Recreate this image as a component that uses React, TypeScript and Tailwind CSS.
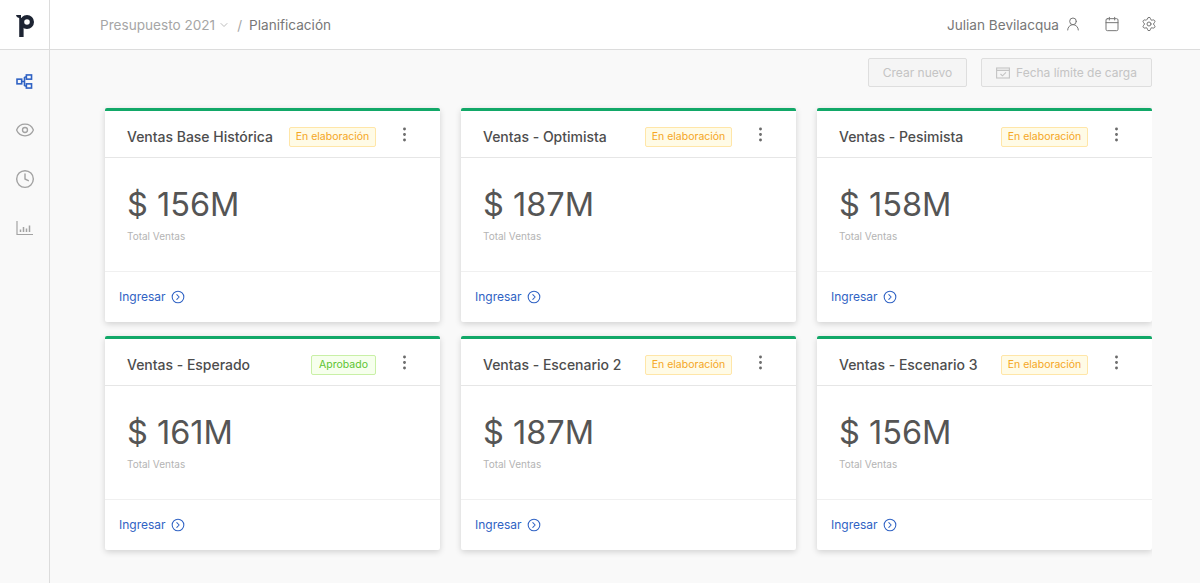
import { Calendar, ChevronDown, CircleChevronRight, Clock, Eye, EllipsisVertical, Settings, UserRound } from 'lucide-react';

interface Scenario {
  title: string;
  amount: string;
  status: 'draft' | 'approved';
}

const scenarios: Scenario[] = [
  { title: 'Ventas Base Histórica', amount: '$ 156M', status: 'draft' },
  { title: 'Ventas - Optimista', amount: '$ 187M', status: 'draft' },
  { title: 'Ventas - Pesimista', amount: '$ 158M', status: 'draft' },
  { title: 'Ventas - Esperado', amount: '$ 161M', status: 'approved' },
  { title: 'Ventas - Escenario 2', amount: '$ 187M', status: 'draft' },
  { title: 'Ventas - Escenario 3', amount: '$ 156M', status: 'draft' },
];

function Logo() {
  return (
    <svg width="20" height="26" viewBox="0 0 20 26" fill="none" aria-hidden="true">
      <path d="M1 2h5v3.2C3.4 5.2 1.4 4.2 1 2z" fill="#1d2433" />
      <path d="M6.4 5v19" stroke="#1d2433" strokeWidth="4.4" />
      <circle cx="12" cy="9" r="4.9" stroke="#1d2433" strokeWidth="4.2" />
    </svg>
  );
}

function FlowIcon() {
  return (
    <svg width="17" height="15" viewBox="0 0 18 16" fill="none" stroke="#2f62c4" strokeWidth="1.7" aria-hidden="true">
      <rect x="1" y="5.5" width="5" height="5" />
      <rect x="11" y="1" width="5.5" height="4.5" />
      <rect x="11" y="10.5" width="5.5" height="4.5" />
      <path d="M6 8h3M9 3.2V12.8M9 3.2h2M9 12.8h2" />
    </svg>
  );
}

function BarsIcon() {
  return (
    <svg width="17" height="16" viewBox="0 0 17 16" fill="none" stroke="#a3a3a3" strokeWidth="1.2" aria-hidden="true">
      <path d="M1 1v13.5h16" />
      <path d="M4.5 12V9.5M7.5 12V7M10.5 12V8.5M13.5 12V5.5" strokeWidth="1.5" />
    </svg>
  );
}

function DeadlineIcon() {
  return (
    <svg width="14" height="12" viewBox="0 0 14 12" fill="none" stroke="#c4c4c4" strokeWidth="1.1" aria-hidden="true">
      <rect x="0.6" y="1" width="12.8" height="10" />
      <path d="M0.6 3.4h12.8M4.5 7l2 1.8L10 5.4" />
    </svg>
  );
}

function ScenarioCard({ title, amount, status }: Scenario) {
  return (
    <article className="flex h-[214px] flex-col rounded-[2px] border-t-[3px] border-[#12a868] bg-white shadow-[0_2px_6px_rgba(0,0,0,0.16)]">
      <div className="flex h-[47px] shrink-0 items-center border-b border-[#e6e6e6] pt-[5px] pl-[22px]">
        <h2 className="flex-1 text-[14px] font-[450] tracking-[-0.02px] whitespace-nowrap text-[#4d4d4d]">{title}</h2>
        {status === 'draft' ? (
          <span className="flex h-[20px] w-[87px] items-center justify-center rounded-[2px] border border-[#ffe6a8] bg-[#fffbe6] text-[10.5px] text-[#f5a623]">
            En elaboración
          </span>
        ) : (
          <span className="flex h-[20px] w-[65px] items-center justify-center rounded-[2px] border border-[#c9f0a6] bg-[#f6ffed] text-[10.5px] text-[#5cc431]">
            Aprobado
          </span>
        )}
        <div className="mr-[26px] ml-[19px] -translate-y-[2px] text-[#666]">
          <EllipsisVertical className="h-[19px] w-[19px]" strokeWidth={1.6} />
        </div>
      </div>
      <div className="flex-1 border-b border-[#f0f0f0] pt-[27px] pl-[22px]">
        <p className="text-[32.5px] leading-[40px] font-normal text-[#555]">{amount}</p>
        <p className="mt-[4px] text-[10px] leading-[14px] text-[#b4b4b4]">Total Ventas</p>
      </div>
      <div className="flex h-[50px] shrink-0 items-center gap-[5px] pl-[14px] text-[#2f62c4]">
        <span className="text-[12px]">Ingresar</span>
        <CircleChevronRight className="h-[14px] w-[14px]" strokeWidth={1.8} />
      </div>
    </article>
  );
}

export default function App() {
  return (
    <div className="flex h-[583px] w-[1200px] flex-col overflow-hidden bg-[#f9f9f9] font-['Inter','Noto_Sans',sans-serif]">
      <header className="flex h-[50px] shrink-0 items-center border-b border-[#dcdcdc] bg-white">
        <div className="flex h-full w-[50px] shrink-0 items-center justify-center border-r border-[#dcdcdc] pt-[2px]">
          <Logo />
        </div>
        <nav className="ml-[50px] flex translate-y-[1px] items-center text-[13.6px] text-[#a6a6a6]">
          <span>Presupuesto 2021</span>
          <ChevronDown className="ml-[3px] h-[12px] w-[12px]" strokeWidth={1.5} />
          <span className="mr-[7px] ml-[7px]">/</span>
          <span className="text-[#777]">Planificación</span>
        </nav>
        <div className="mr-[43px] ml-auto flex items-center text-[#777]">
          <span className="translate-y-[1px] text-[13.6px]">Julian Bevilacqua</span>
          <UserRound className="ml-[6px] h-[16px] w-[16px]" strokeWidth={1.5} />
          <Calendar className="ml-[23px] h-[16px] w-[16px]" strokeWidth={1.5} />
          <Settings className="ml-[21px] h-[16px] w-[16px]" strokeWidth={1.5} />
        </div>
      </header>
      <div className="flex min-h-0 flex-1">
        <aside className="flex w-[50px] shrink-0 flex-col items-center gap-[29px] border-r border-[#dcdcdc] pt-[21px] text-[#a3a3a3]">
          <div className="flex h-[20px] items-center"><FlowIcon /></div>
          <div className="flex h-[20px] items-center"><Eye className="h-[20px] w-[20px]" strokeWidth={1.6} /></div>
          <div className="flex h-[20px] items-center"><Clock className="h-[20px] w-[20px]" strokeWidth={1.7} /></div>
          <div className="flex h-[20px] items-center"><BarsIcon /></div>
        </aside>
        <main className="w-[1102px] overflow-hidden pl-[55px]">
          <div className="flex justify-end gap-[14px] pt-[8px]">
            <button className="h-[29px] w-[99px] rounded-[2px] border border-[#dedede] bg-[#f5f5f5] text-[12px] text-[#c4c4c4]">
              Crear nuevo
            </button>
            <button className="flex h-[29px] w-[171px] items-center justify-center gap-[6px] rounded-[2px] border border-[#dedede] bg-[#f5f5f5] text-[12px] text-[#c4c4c4]">
              <DeadlineIcon />
              Fecha límite de carga
            </button>
          </div>
          <section className="mt-[21px] grid grid-cols-[335px_335px_335px] gap-x-[21px] gap-y-[14px]">
            {scenarios.map((scenario) => (
              <ScenarioCard key={scenario.title} {...scenario} />
            ))}
          </section>
        </main>
      </div>
    </div>
  );
}
